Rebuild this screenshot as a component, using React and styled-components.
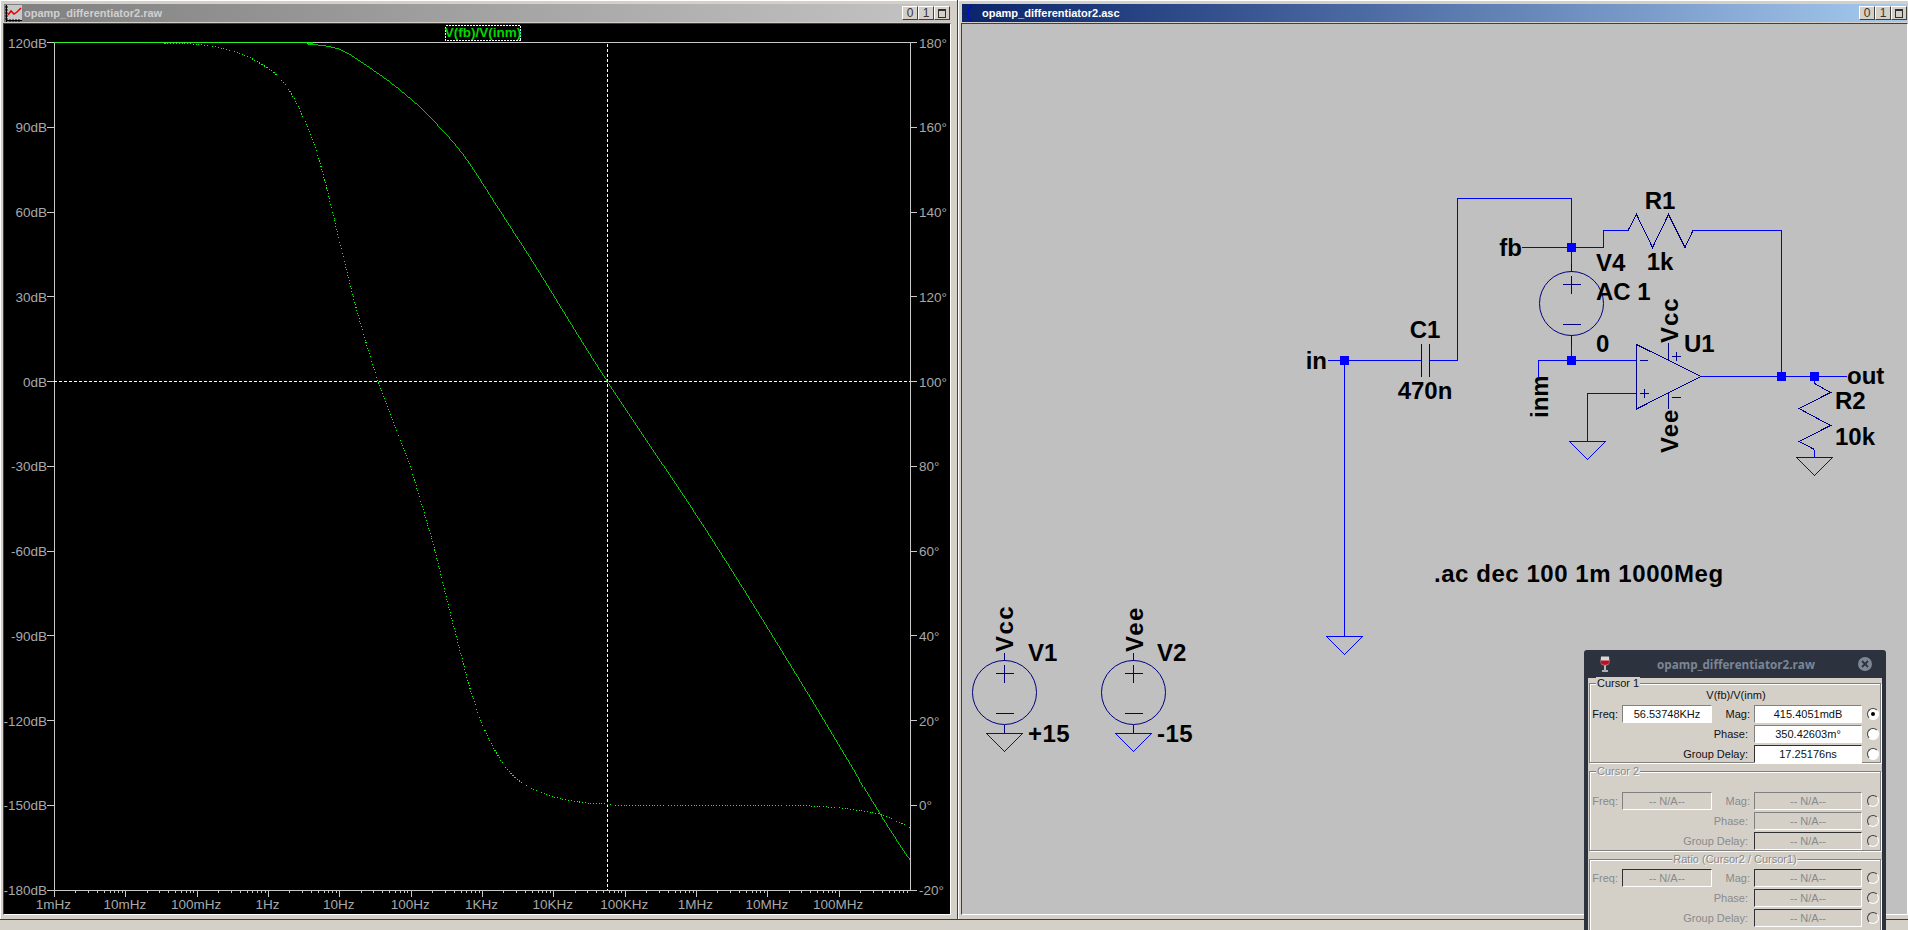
import { createGlobalStyle, styled } from 'styled-components';

const GlobalStyle = createGlobalStyle`
  html, body {
    margin: 0;
    padding: 0;
    overflow: hidden;
    background: #d4d0c8;
  }
  * {
    box-sizing: border-box;
  }
`;

const Desktop = styled.div`
  position: relative;
  width: 1908px;
  height: 930px;
  overflow: hidden;
  background: #d4d0c8;
  font-family: 'Liberation Sans', Arial, sans-serif;
`;

const WindowRow = styled.div`
  display: flex;
  height: 920px;
`;

const Window = styled.div`
  display: flex;
  flex-direction: column;
  flex: none;
  width: ${(p) => p.$width}px;
  padding: 4px ${(p) => p.$padRight}px 4px 3px;
  background: #d4d0c8;
  border-bottom: 1px solid #404040;
  border-right: ${(p) => (p.$active ? 'none' : '1px solid #404040')};
  box-shadow: inset 1px 1px 0 #ffffff;
`;

const TitleBar = styled.div`
  display: flex;
  align-items: center;
  flex: none;
  height: 18px;
  margin: 0 1px 1px;
  padding-left: 1px;
  color: ${(p) => (p.$active ? '#ffffff' : '#d0d0d0')};
  background: ${(p) =>
    p.$active
      ? 'linear-gradient(to right, #0a246a, #a6caef)'
      : 'linear-gradient(to right, #808080, #c4c4c4)'};
`;

const TitleText = styled.span`
  margin-left: 2px;
  font-size: 11px;
  font-weight: bold;
  white-space: nowrap;
`;

const TitleButtons = styled.div`
  display: flex;
  margin-left: auto;
`;

const TitleButton = styled.div`
  display: flex;
  align-items: center;
  justify-content: center;
  width: 16px;
  height: 14px;
  color: #40302c;
  font-size: 12px;
  background: #d4d0c8;
  border: 1px solid;
  border-color: #ffffff #404040 #404040 #ffffff;
`;

const MaxBox = styled.span`
  width: 8px;
  height: 9px;
  border: 1px solid #303030;
  border-top-width: 2px;
`;

const Pane = styled.div`
  flex: 1;
  min-height: 0;
  overflow: hidden;
  background: ${(p) => p.$bg};
  border: 1px solid;
  border-color: #404040 #ffffff #ffffff #404040;
`;

const Drawing = styled.svg`
  display: block;
  font-family: 'Liberation Sans', Arial, sans-serif;
`;

const AxisText = styled.text`
  fill: #a8a8a8;
  font-size: 13.5px;
`;

const TraceName = styled.text`
  fill: #00d800;
  font-size: 13.5px;
  font-weight: bold;
`;

const PartText = styled.text`
  fill: #000000;
  font-size: 24px;
  font-weight: bold;
  letter-spacing: ${(p) => p.$spacing || 0}px;
`;

const CursorDialog = styled.div`
  position: absolute;
  left: 1584px;
  top: 650px;
  width: 302px;
  height: 280px;
  padding: 0 4px;
  overflow: hidden;
  background: #2d323f;
  border-radius: 3px 3px 0 0;
`;

const DialogTitle = styled.div`
  display: flex;
  align-items: center;
  height: 28px;
  padding: 0 10px 0 11px;
`;

const DialogName = styled.span`
  flex: 1;
  padding-left: 3px;
  text-align: center;
  color: #7b8694;
  font-family: 'Open Sans', 'Liberation Sans', sans-serif;
  font-size: 11.7px;
  font-weight: bold;
`;

const CloseDot = styled.span`
  display: flex;
  align-items: center;
  justify-content: center;
  width: 14px;
  height: 14px;
  border-radius: 50%;
  background: #7d8794;
`;

const DialogBody = styled.div`
  display: flex;
  flex-direction: column;
  gap: 8px;
  height: 252px;
  padding: 5px 1px 0;
  background: #d4d0c8;
`;

const Group = styled.div`
  position: relative;
  flex: none;
  height: ${(p) => p.$height}px;
  padding-top: ${(p) => p.$padTop}px;
  border: 1px solid #808080;
  box-shadow: inset 1px 1px 0 #ffffff, 1px 1px 0 #ffffff;
`;

const Legend = styled.span`
  position: absolute;
  top: -7px;
  left: ${(p) => (p.$center ? '50%' : '6px')};
  transform: ${(p) => (p.$center ? 'translateX(-50%)' : 'none')};
  padding: 0 1px;
  font-size: 11px;
  line-height: 13px;
  white-space: nowrap;
  background: #d4d0c8;
  color: ${(p) => (p.$off ? '#8a8a8a' : '#101010')};
  text-shadow: ${(p) => (p.$off ? '1px 1px 0 #ffffff' : 'none')};
`;

const TraceLine = styled.div`
  height: 14px;
  margin-bottom: 3px;
  padding-left: 2px;
  text-align: center;
  font-size: 11px;
  line-height: 14px;
  color: #101010;
`;

const FieldGrid = styled.div`
  display: grid;
  grid-template-columns: 28px 90px 1fr 108px 14px;
  grid-auto-rows: 18px;
  column-gap: 4px;
  row-gap: 2px;
`;

const FieldLabel = styled.span`
  grid-column: ${(p) => p.$span || 'auto'};
  align-self: center;
  padding-right: ${(p) => (p.$span ? '2px' : '0')};
  text-align: right;
  font-size: 11px;
  white-space: nowrap;
  color: ${(p) => (p.$off ? '#8a8a8a' : '#101010')};
`;

const Value = styled.div`
  display: flex;
  align-items: center;
  justify-content: center;
  font-size: 11px;
  color: ${(p) => (p.$off ? '#8a8a8a' : '#101010')};
  background: ${(p) => (p.$off ? '#d4d0c8' : '#ffffff')};
  border: 1px solid;
  border-color: ${(p) => (p.$dark ? '#303030' : '#808080')} #ffffff #ffffff
    ${(p) => (p.$dark ? '#303030' : '#808080')};
`;

const Radio = styled.span`
  display: flex;
  align-items: center;
  justify-content: center;
  align-self: center;
  justify-self: center;
  width: 12px;
  height: 12px;
  border-radius: 50%;
  border: 1px solid;
  border-color: #404040 #ffffff #ffffff #404040;
  background: ${(p) => (p.$off ? '#d4d0c8' : '#ffffff')};

  &::after {
    content: '';
    display: ${(p) => (p.$on ? 'block' : 'none')};
    width: 4px;
    height: 4px;
    border-radius: 50%;
    background: #000000;
  }
`;

// plot geometry, in page pixels
const PLOT = { left: 54, right: 910, top: 42.5, bottom: 890 };
const DECADE = (PLOT.right - PLOT.left) / 12;
const STEP_Y = (PLOT.bottom - PLOT.top) / 10;

const FREQS = ['1mHz', '10mHz', '100mHz', '1Hz', '10Hz', '100Hz', '1KHz', '10KHz', '100KHz', '1MHz', '10MHz', '100MHz'];
const DB = ['120dB', '90dB', '60dB', '30dB', '0dB', '-30dB', '-60dB', '-90dB', '-120dB', '-150dB', '-180dB'];
const DEG = ['180°', '160°', '140°', '120°', '100°', '80°', '60°', '40°', '20°', '0°', '-20°'];

const GAIN = [
  [54, 42.5], [290, 42.6], [308, 44], [330, 46.7], [346.7, 52.7], [373, 70], [396.7, 87.3], [423, 110],
  [446.7, 135], [458, 148], [474, 170], [493, 200], [516.7, 236.7], [540, 273.3], [607, 381], [708, 533], [802, 684],
  [879.6, 813], [910, 860],
];

const PHASE = [
  [148, 42.7], [196, 44.3], [228.6, 50], [253, 59.3], [281.7, 80], [303, 116.7], [320, 163], [340, 243],
  [356.7, 310], [376.7, 376.7], [396, 430], [408, 460], [422.4, 506.7], [434.7, 550], [447, 600], [459, 646.7],
  [471.4, 693], [487.8, 736.7], [508, 770], [528.6, 786.7], [553, 796.7], [581.6, 802.3], [606, 804],
  [630.6, 805.3], [775.5, 805.3], [822.4, 806.7], [851, 809.3], [879.6, 814.3], [910, 827.3],
];

// catmull-rom through the measured points
function smooth(points) {
  let d = `M${points[0][0]} ${points[0][1]}`;
  for (let i = 0; i < points.length - 1; i++) {
    const a = points[Math.max(i - 1, 0)];
    const b = points[i];
    const c = points[i + 1];
    const e = points[Math.min(i + 2, points.length - 1)];
    const c1x = b[0] + (c[0] - a[0]) / 6;
    const c1y = b[1] + (c[1] - a[1]) / 6;
    const c2x = c[0] - (e[0] - b[0]) / 6;
    const c2y = c[1] - (e[1] - b[1]) / 6;
    d += ` C${c1x.toFixed(1)} ${c1y.toFixed(1)} ${c2x.toFixed(1)} ${c2y.toFixed(1)} ${c[0]} ${c[1]}`;
  }
  return d;
}

function axisTicks() {
  const ticks = [];
  for (let i = 0; i < 12; i++) {
    const x0 = PLOT.left + i * DECADE;
    for (let m = 1; m < 10; m++) {
      const x = Math.round(x0 + Math.log10(m) * DECADE) + 0.5;
      ticks.push(`M${x} ${PLOT.bottom}V${PLOT.bottom + (m === 1 ? 7 : 3)}`);
    }
  }
  return ticks.join('');
}

function Plot() {
  return (
    <Drawing width="946" height="890" viewBox="4 24 946 890">
      <g shapeRendering="crispEdges" fill="none" stroke="#c8c8c8">
        <rect x="54.5" y="42.5" width="856" height="848" />
        <path d={axisTicks()} />
        {DB.map((_, i) => {
          const y = Math.round(PLOT.top + i * STEP_Y - 0.5) + 0.5;
          return <path key={i} d={`M47 ${y}H54M910 ${y}H917`} />;
        })}
        <path d="M607.5 44V890" stroke="#ffffff" strokeDasharray="3 2" />
        <path d="M54 381.5H910" stroke="#ffffff" strokeDasharray="3 2" />
        <rect x="445.5" y="25.5" width="75" height="15" stroke="#ffffff" strokeDasharray="2 1" />
      </g>
      {DB.map((t, i) => (
        <AxisText key={t} x="47" y={PLOT.top + i * STEP_Y + 5} textAnchor="end">{t}</AxisText>
      ))}
      {DEG.map((t, i) => (
        <AxisText key={t} x="919" y={PLOT.top + i * STEP_Y + 5}>{t}</AxisText>
      ))}
      {FREQS.map((t, i) => (
        <AxisText key={t} x={PLOT.left + i * DECADE - 0.5} y="909" textAnchor="middle">{t}</AxisText>
      ))}
      <TraceName x="483" y="37" textAnchor="middle">V(fb)/V(inm)</TraceName>
      <g fill="none" stroke="#00ff00" shapeRendering="crispEdges">
        <path d={smooth(PHASE)} strokeDasharray="1 1.8" />
        <path d={smooth(GAIN)} strokeWidth="0.8" />
      </g>
    </Drawing>
  );
}

function Ground({ x, y, w = 18, h = 18 }) {
  return <path d={`M${x - w} ${y}H${x + w}L${x} ${y + h}Z`} stroke="#0000ff" fill="none" />;
}

function Source({ x, y }) {
  return (
    <g stroke="#000080" fill="none">
      <circle cx={x} cy={y} r="32" shapeRendering="auto" />
      <path d={`M${x - 9} ${y - 19}H${x + 9}M${x} ${y - 28}V${y - 10}M${x - 9} ${y + 21}H${x + 9}`} />
      <path d={`M${x} ${y - 40}V${y - 32}M${x} ${y + 32}V${y + 41}`} />
    </g>
  );
}

function Junction({ x, y }) {
  return <rect x={x - 4.5} y={y - 4.5} width="9" height="9" fill="#0000ff" />;
}

const WIRES = [
  'M1328 360.5H1421.5',
  'M1344.5 360.5V636',
  'M1429.5 360.5H1457.5V198.5H1571.5V271',
  'M1521.5 247.5H1603.5V230.5H1628',
  'M1693 230.5H1781.5V376.5',
  'M1571.5 335V360.5',
  'M1538.5 376.5V360.5H1636',
  'M1587.5 442V393.5H1636',
  'M1701 376.5H1847',
  'M1814.5 376.5V383.5',
  'M1814.5 449.5V457.5',
];

const SYMBOLS = [
  'M1421.5 344V377M1429.5 344V377',
  'M1628 230.5L1636.5 214.5L1652.5 247.5L1668.5 214.5L1685 247.5L1693 230.5',
  'M1636.5 344.5L1701 376.5L1636.5 409Z',
  'M1639.5 360.5H1648M1640 393.5H1649M1644.5 389V398',
  'M1668.5 343V360M1668.5 393V409',
  'M1672 356.5H1681M1676.5 352V361M1672 397.5H1681',
  'M1814.5 383.5L1830.5 392.5L1799 408.5L1830.5 425.5L1799 441.5L1814.5 449.5',
];

const NODES = [
  [1344.5, 360.5], [1571.5, 247.5], [1571.5, 360.5], [1781.5, 376.5], [1814.5, 376.5],
];

const LABELS = [
  { t: 'R1', x: 1660, y: 209, anchor: 'middle' },
  { t: '1k', x: 1660, y: 270, anchor: 'middle' },
  { t: 'V4', x: 1596, y: 271 },
  { t: 'AC 1', x: 1596, y: 300 },
  { t: 'fb', x: 1522, y: 256, anchor: 'end' },
  { t: 'in', x: 1327, y: 369, anchor: 'end' },
  { t: 'C1', x: 1425, y: 338, anchor: 'middle' },
  { t: '470n', x: 1425, y: 399, anchor: 'middle' },
  { t: '0', x: 1596, y: 352 },
  { t: 'U1', x: 1684, y: 352 },
  { t: 'out', x: 1847, y: 384 },
  { t: 'R2', x: 1835, y: 409 },
  { t: '10k', x: 1835, y: 445 },
  { t: '.ac dec 100 1m 1000Meg', x: 1434, y: 582, spacing: 0.55 },
  { t: 'V1', x: 1028, y: 661 },
  { t: 'V2', x: 1157, y: 661 },
  { t: '+15', x: 1028, y: 742, spacing: 0.5 },
  { t: '-15', x: 1157, y: 742, spacing: 0.5 },
  { t: 'Vcc', x: 1678, y: 343, up: true, spacing: 1 },
  { t: 'inm', x: 1548, y: 418, up: true },
  { t: 'Vee', x: 1678, y: 453, up: true, spacing: 1 },
  { t: 'Vcc', x: 1013, y: 652, up: true, spacing: 1.5 },
  { t: 'Vee', x: 1143, y: 652, up: true, spacing: 1.5 },
];

function Schematic() {
  return (
    <Drawing width="946" height="890" viewBox="962 24 946 890">
      <g shapeRendering="crispEdges" fill="none">
        <path d={WIRES.join('')} stroke="#0000ff" />
        <path d={SYMBOLS.join('')} stroke="#000090" />
        {NODES.map(([x, y]) => <Junction key={`${x}-${y}`} x={x} y={y} />)}
        <Source x={1571.5} y={303.5} />
        <Source x={1004.5} y={692.5} />
        <Source x={1133.5} y={692.5} />
        <Ground x={1587.5} y={441.5} />
        <Ground x={1814.5} y={457.5} />
        <Ground x={1344.5} y={636.5} />
        <Ground x={1004.5} y={733.5} />
        <Ground x={1133.5} y={733.5} />
      </g>
      {LABELS.map((l) => (
        <PartText
          key={`${l.t}-${l.x}`}
          x={l.x}
          y={l.y}
          $spacing={l.spacing}
          textAnchor={l.anchor || 'start'}
          transform={l.up ? `rotate(-90 ${l.x} ${l.y})` : undefined}
        >
          {l.t}
        </PartText>
      ))}
    </Drawing>
  );
}

function WaveIcon() {
  return (
    <svg width="17" height="17" viewBox="0 0 17 17">
      <rect x="2" y="0" width="15" height="15" fill="#c8c8c8" />
      <path d="M1.5 0V17M0 2H3M0 5H3M0 8H3M0 11H3M0 14H3M2 15.5H17M5 14V17M8 14V17M11 14V17M14 14V17" stroke="#000000" fill="none" />
      <path d="M3 10L6 6L9 9L12 7L16 3" stroke="#e00000" strokeWidth="1.5" fill="none" />
    </svg>
  );
}

function SchematicIcon() {
  return (
    <svg width="17" height="17" viewBox="0 0 17 17">
      <path d="M9 1Q4 4 5 8.5Q4 13 9 16M0 8.5H5" stroke="#0000ff" strokeWidth="1.2" fill="none" />
    </svg>
  );
}

function WineIcon() {
  return (
    <svg width="12" height="16" viewBox="0 0 12 16">
      <path d="M2 0.5H10L10.5 6Q10 9.5 6 9.5Q2 9.5 1.5 6Z" fill="#d8d8d8" />
      <path d="M1.7 4.5H10.3L10.3 6.5Q9.5 9 6 9Q2.5 9 1.7 6.5Z" fill="#c01020" />
      <path d="M6 9.5V14M3 15H9" stroke="#d8d8d8" strokeWidth="1.6" fill="none" />
    </svg>
  );
}

function WindowButtons() {
  return (
    <TitleButtons>
      <TitleButton>0</TitleButton>
      <TitleButton>1</TitleButton>
      <TitleButton><MaxBox /></TitleButton>
    </TitleButtons>
  );
}

function CursorFields({ values, off, dark, selected }) {
  const names = ['Mag:', 'Phase:', 'Group Delay:'];
  return (
    <FieldGrid>
      <FieldLabel $off={off}>Freq:</FieldLabel>
      <Value $off={off} $dark={dark}>{values[0]}</Value>
      <FieldLabel $off={off}>{names[0]}</FieldLabel>
      <Value $off={off} $dark={dark}>{values[1]}</Value>
      <Radio $off={off} $on={selected} />
      <FieldLabel $off={off} $span="1 / 4">{names[1]}</FieldLabel>
      <Value $off={off} $dark={dark}>{values[2]}</Value>
      <Radio $off={off} />
      <FieldLabel $off={off} $span="1 / 4">{names[2]}</FieldLabel>
      <Value $off={off} $dark>{values[3]}</Value>
      <Radio $off={off} />
    </FieldGrid>
  );
}

const NA = ['-- N/A--', '-- N/A--', '-- N/A--', '-- N/A--'];

function App() {
  return (
    <Desktop>
      <GlobalStyle />
      <WindowRow>
        <Window $width={958} $padRight={6}>
          <TitleBar>
            <WaveIcon />
            <TitleText>opamp_differentiator2.raw</TitleText>
            <WindowButtons />
          </TitleBar>
          <Pane $bg="#000000">
            <Plot />
          </Pane>
        </Window>
        <Window $width={950} $padRight={0} $active>
          <TitleBar $active>
            <SchematicIcon />
            <TitleText>opamp_differentiator2.asc</TitleText>
            <WindowButtons />
          </TitleBar>
          <Pane $bg="#c0c0c0">
            <Schematic />
          </Pane>
        </Window>
      </WindowRow>
      <CursorDialog>
        <DialogTitle>
          <WineIcon />
          <DialogName>opamp_differentiator2.raw</DialogName>
          <CloseDot>
            <svg width="8" height="8" viewBox="0 0 8 8">
              <path d="M1 1L7 7M7 1L1 7" stroke="#2d323f" strokeWidth="1.8" />
            </svg>
          </CloseDot>
        </DialogTitle>
        <DialogBody>
          <Group $height={80} $padTop={4}>
            <Legend>Cursor 1</Legend>
            <TraceLine>V(fb)/V(inm)</TraceLine>
            <CursorFields values={['56.53748KHz', '415.4051mdB', '350.42603m°', '17.25176ns']} selected />
          </Group>
          <Group $height={80} $padTop={20}>
            <Legend $off>Cursor 2</Legend>
            <CursorFields values={NA} off />
          </Group>
          <Group $height={80} $padTop={9}>
            <Legend $off $center>Ratio (Cursor2 / Cursor1)</Legend>
            <CursorFields values={NA} off dark />
          </Group>
        </DialogBody>
      </CursorDialog>
    </Desktop>
  );
}

export default App;
